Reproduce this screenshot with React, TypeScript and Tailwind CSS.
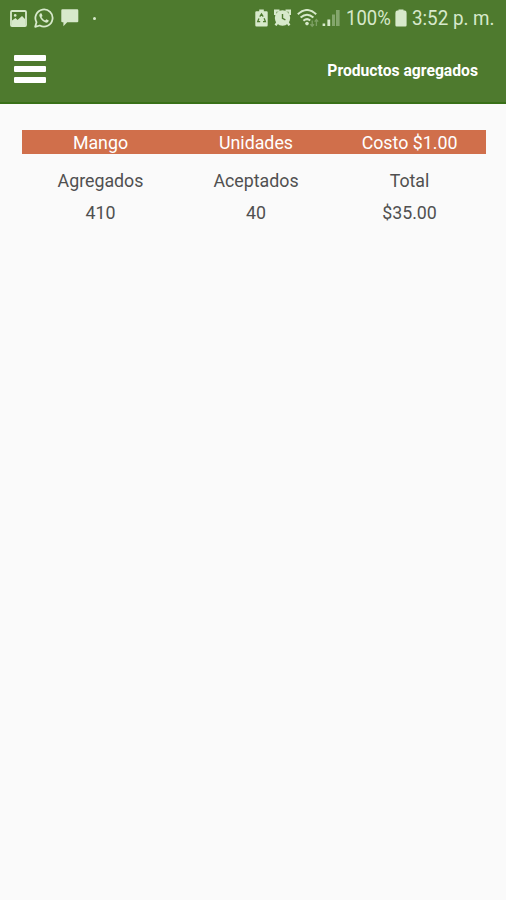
import React from 'react';

interface ProductSummary {
  name: string;
  unitsLabel: string;
  cost: string;
  added: string;
  accepted: string;
  total: string;
}

const products: ProductSummary[] = [
  { name: 'Mango', unitsLabel: 'Unidades', cost: 'Costo $1.00', added: '410', accepted: '40', total: '$35.00' },
];

const ImageIcon: React.FC = () => (
  <svg className="h-[17px] w-[17px]" viewBox="0 0 17 17" fill="none">
    <rect x="1" y="1" width="15" height="15" rx="1" stroke="currentColor" strokeWidth="1.8" />
    <circle cx="5.2" cy="5.4" r="1.3" fill="currentColor" />
    <path d="M2 15V10.5L5.5 8L7.5 10L12 6L15 9V15Z" fill="currentColor" />
  </svg>
);

const WhatsAppIcon: React.FC = () => (
  <svg className="h-5 w-5" viewBox="0 0 20 20" fill="none">
    <path d="M1.2 18.8L2.5 14.2A8.6 8.6 0 1 1 5.8 17.5Z" stroke="currentColor" strokeWidth="1.8" strokeLinejoin="round" />
    <path
      d="M6.8 5.2C5.4 5.8 5 7.2 5.6 8.6C6.7 11.4 8.8 13.5 11.6 14.5C13.2 15 14.6 14 14.8 12.6L12.4 11.3L11.2 12.6C9.6 12 8.2 10.6 7.5 9.1L8.5 7.9L7.6 5.4Z"
      fill="currentColor"
    />
  </svg>
);

const ChatIcon: React.FC = () => (
  <svg className="h-[18px] w-[18px]" viewBox="0 0 18 18" fill="currentColor">
    <path d="M1.3 .3H16.2Q17.3 .3 17.3 1.4V12.2Q17.3 13.3 16.2 13.3H6.2L2.4 17.2V13.3H1.3Q.3 13.3 .3 12.2V1.4Q.3 .3 1.3 .3Z" />
  </svg>
);

const RecycleBatteryIcon: React.FC = () => (
  <svg className="h-[18px] w-[13px]" viewBox="0 0 13 18">
    <path d="M4.2 .5H8.8V2.2H11.6Q12.7 2.2 12.7 3.3V16.2Q12.7 17.4 11.6 17.4H1.4Q.3 17.4 .3 16.2V3.3Q.3 2.2 1.4 2.2H4.2Z" fill="currentColor" />
    <path d="M4.8 7.6L6.5 5L8.2 7.6M9.1 9.2L10.4 12.6H8M5.2 12.6H2.7L3.9 9.4" stroke="#4e7a2e" strokeWidth="1.3" fill="none" />
  </svg>
);

const AlarmIcon: React.FC = () => (
  <svg className="h-[18px] w-[17px]" viewBox="0 0 17 18">
    <path d="M1.2 6V1.6H5.5M15.8 6V1.6H11.5M3.4 13.5L1.6 16.4M13.6 13.5L15.4 16.4" stroke="currentColor" strokeWidth="2.4" fill="none" />
    <circle cx="8.5" cy="9" r="7.7" fill="currentColor" />
    <path d="M8.5 5V9.4L11.4 10.8" stroke="#4e7a2e" strokeWidth="1.4" fill="none" />
  </svg>
);

const WifiIcon: React.FC = () => (
  <svg className="h-[19px] w-[22px]" viewBox="0 0 22 19" fill="none" stroke="currentColor">
    <path d="M.8 5.2Q10 -3.2 19.2 5.2M3.6 8.6Q10 2.8 16.4 8.6M6.4 11.8Q10 8.6 13.2 11.4" strokeWidth="2" />
    <circle cx="10" cy="14.6" r="1.8" fill="currentColor" stroke="none" />
    <path d="M15.2 11.5V17.2M13.4 15.2L15.2 17.2L17 15.2M19.4 17V10.6M17.7 12.6L19.4 10.6L21.2 12.6" strokeWidth="1.3" opacity=".35" />
  </svg>
);

const SignalIcon: React.FC = () => (
  <svg className="h-[18px] w-[18px]" viewBox="0 0 18 18" fill="currentColor">
    <rect x=".6" y="14.5" width="2.6" height="2.5" />
    <rect x="5.4" y="10.5" width="2.8" height="6.5" />
    <rect x="10" y="5.5" width="3" height="11.5" opacity=".4" />
    <rect x="14" y="1" width="3.6" height="16" opacity=".4" />
  </svg>
);

const BatteryIcon: React.FC = () => (
  <svg className="h-[18px] w-3" viewBox="0 0 12 18" fill="currentColor">
    <path d="M3.5 .5H8.5V1.6H10Q11.6 2 11.6 4V16.2Q11.6 17.4 10.4 17.4H1.6Q.4 17.4 .4 16.2V4Q.4 2 2 1.6H3.5Z" />
  </svg>
);

const StatusBar: React.FC = () => (
  <div className="flex h-9 items-center pl-2.5 text-[#d7e9cb]">
    <ImageIcon />
    <div className="ml-[7px]"><WhatsAppIcon /></div>
    <div className="ml-[7px]"><ChatIcon /></div>
    <div className="ml-[14px] size-[3px] rounded-full bg-[#d7e9cb]" />
    <div className="ml-[159px]"><RecycleBatteryIcon /></div>
    <div className="ml-1.5"><AlarmIcon /></div>
    <div className="ml-1.5"><WifiIcon /></div>
    <div className="ml-[3px]"><SignalIcon /></div>
    <div className="ml-[6px] w-[45px] text-[21px] leading-9 whitespace-nowrap">
      <span className="inline-block origin-left scale-x-[.88]">100%</span>
    </div>
    <div className="ml-[4px]"><BatteryIcon /></div>
    <div className="ml-[5px] w-[84px] text-[21px] leading-9 whitespace-nowrap">
      <span className="inline-block origin-left scale-x-[.895]">3:52 p. m.</span>
    </div>
  </div>
);

const AppHeader: React.FC = () => (
  <div className="flex h-[68px] items-center justify-between border-b-2 border-[#397018] pr-7 pl-3.5">
    <button className="flex flex-col gap-[5px]" aria-label="Menú">
      <span className="h-1.5 w-8 rounded-[1px] bg-white" />
      <span className="h-1.5 w-8 rounded-[1px] bg-white" />
      <span className="h-1.5 w-8 rounded-[1px] bg-white" />
    </button>
    <h1 className="pt-1 text-[15.7px] leading-6 font-bold text-white">Productos agregados</h1>
  </div>
);

const ProductTable: React.FC<{ product: ProductSummary }> = ({ product }) => (
  <div className="text-center text-[17.8px] text-[#505050]">
    <div className="grid h-6 grid-cols-[157px_154px_153px] items-center bg-[#d06f4b] leading-[26px] text-white">
      <span>{product.name}</span>
      <span>{product.unitsLabel}</span>
      <span>{product.cost}</span>
    </div>
    <div className="mt-[11px] grid grid-cols-[157px_154px_153px] leading-8">
      <span>Agregados</span>
      <span>Aceptados</span>
      <span>Total</span>
      <span>{product.added}</span>
      <span>{product.accepted}</span>
      <span>{product.total}</span>
    </div>
  </div>
);

export default function App() {
  return (
    <div className="h-[900px] w-[506px] overflow-hidden bg-[#fafafa] font-[Roboto,sans-serif]">
      <header className="bg-[#4e7a2e]">
        <StatusBar />
        <AppHeader />
      </header>
      <main className="pt-[26px] pr-5 pl-[22px]">
        {products.map((product) => (
          <ProductTable key={product.name} product={product} />
        ))}
      </main>
    </div>
  );
}
